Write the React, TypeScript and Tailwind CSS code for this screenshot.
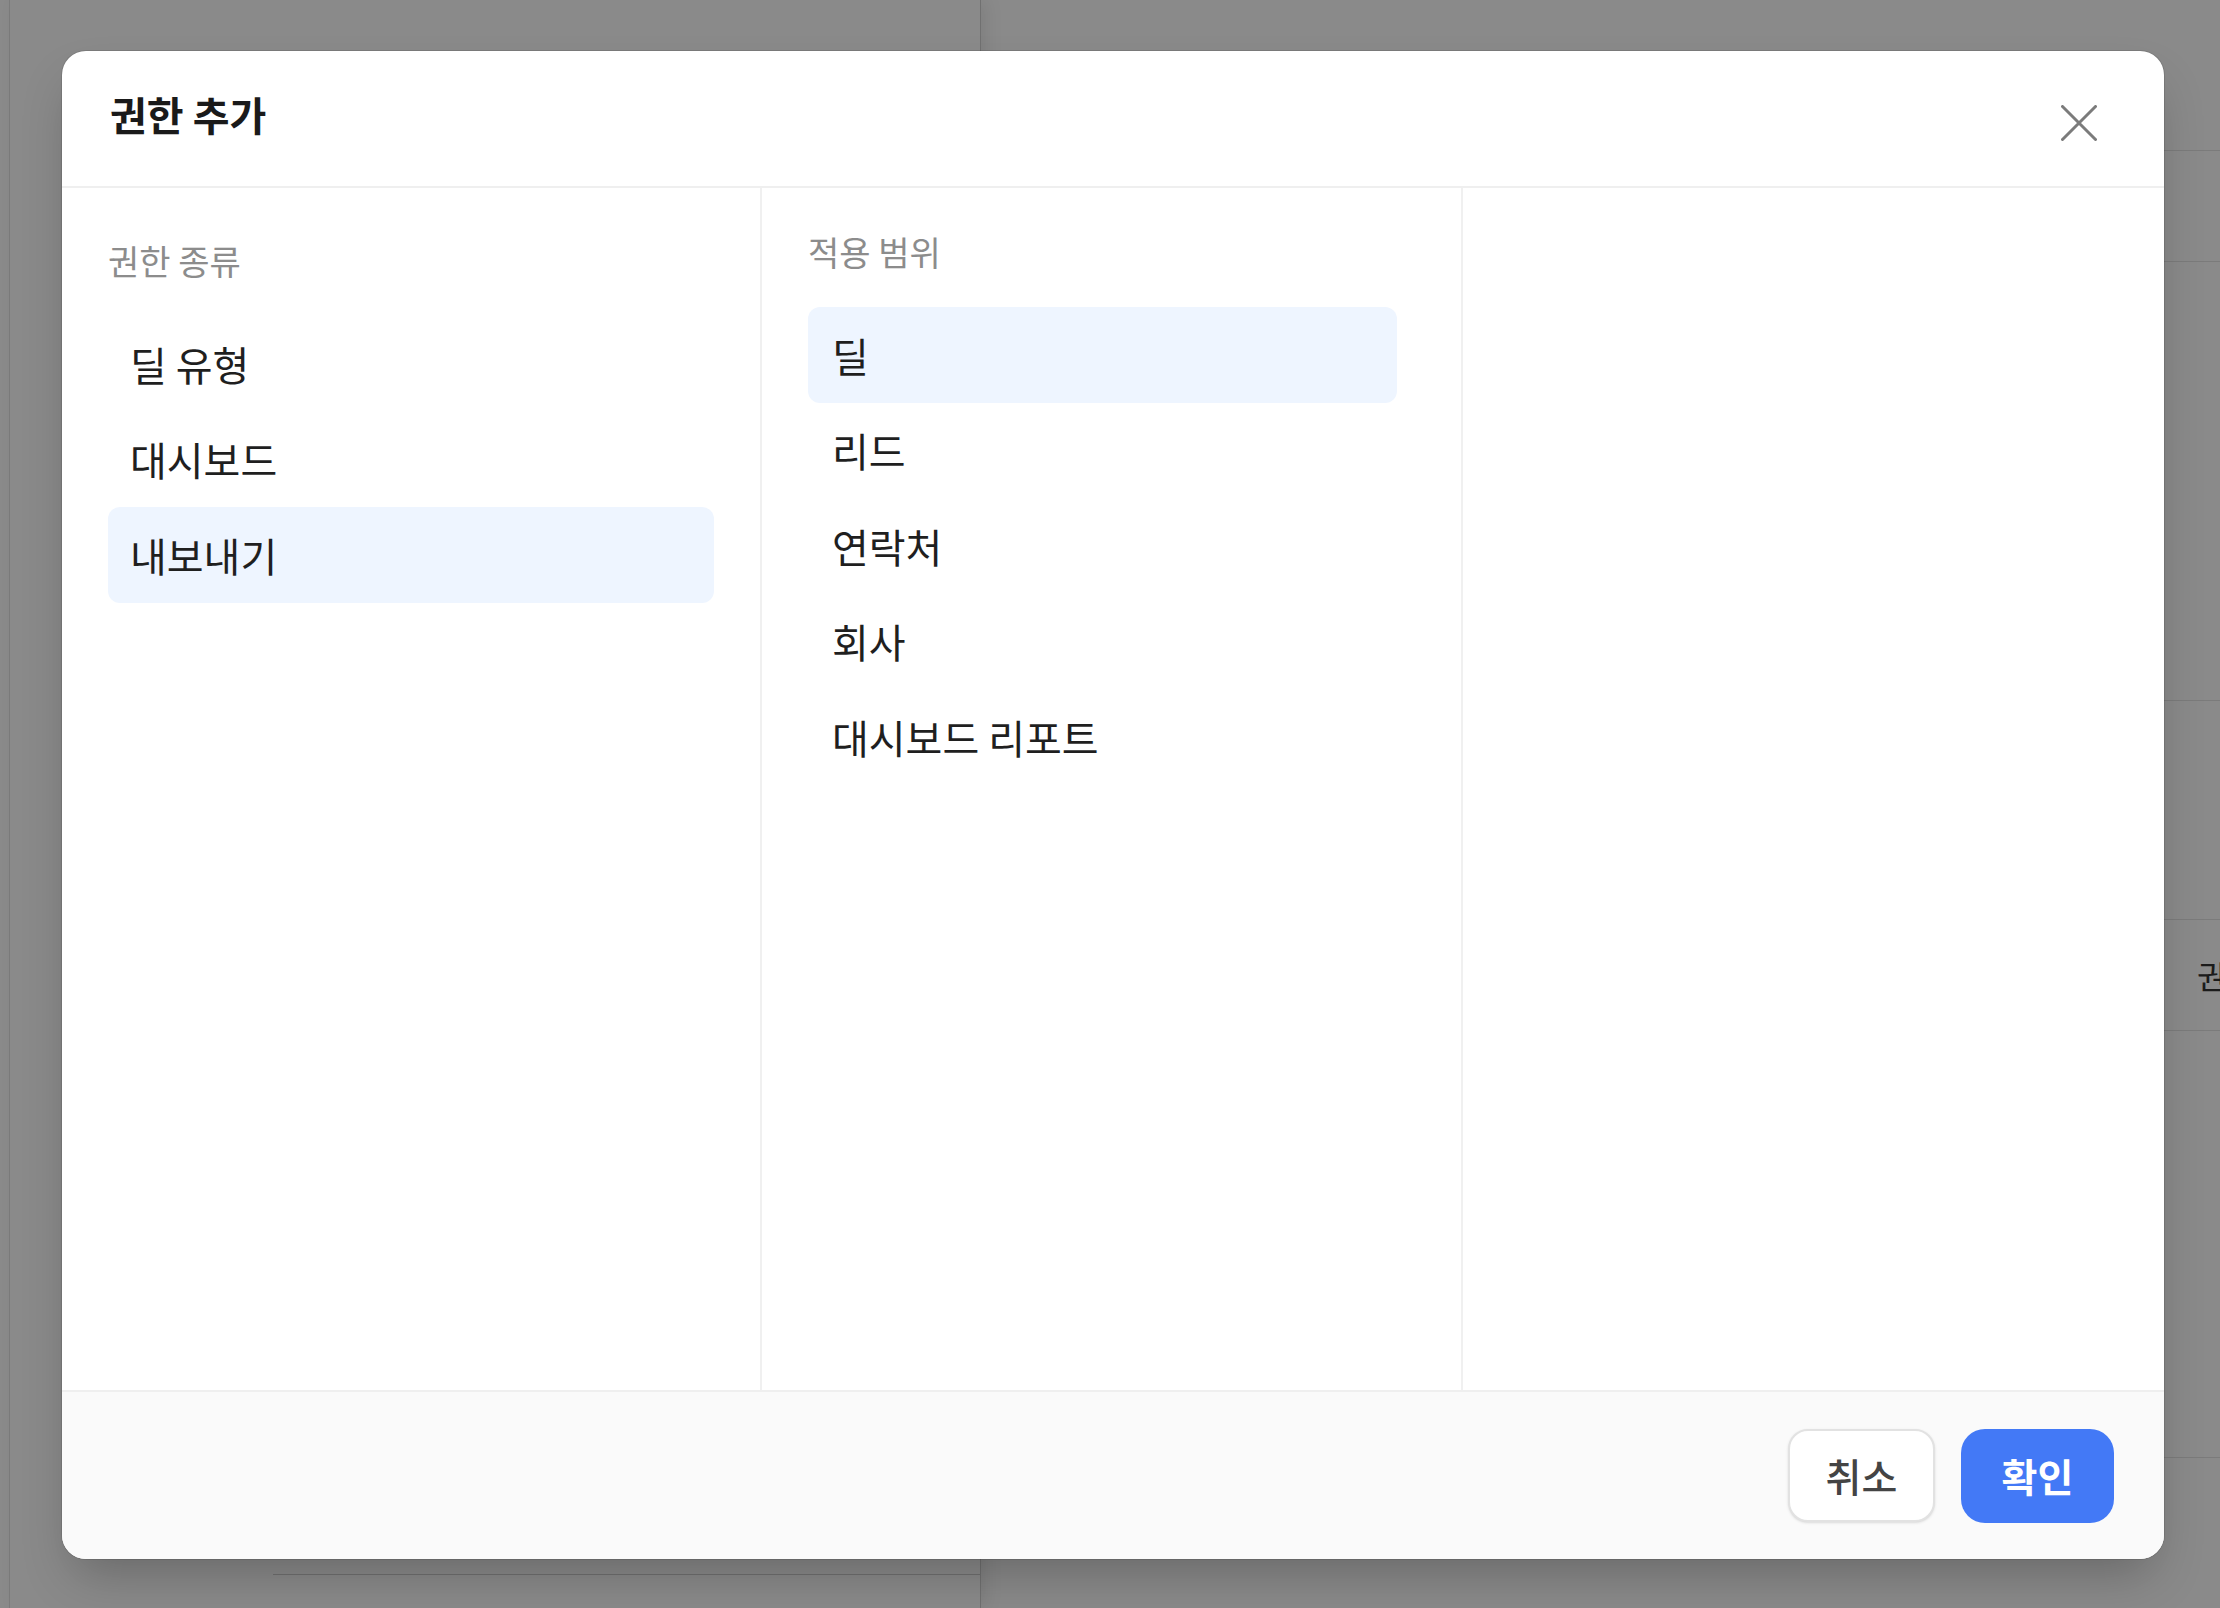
import React, { useState } from 'react';

const FONT = { fontFamily: '"Noto Sans CJK KR", "Noto Sans", sans-serif' };

const permissionTypes = ['딜 유형', '대시보드', '내보내기'];
const scopes = ['딜', '리드', '연락처', '회사', '대시보드 리포트'];

const ListItem: React.FC<{ label: string; active: boolean; onClick: () => void; inset: string }> = ({
  label,
  active,
  onClick,
  inset,
}) => (
  <button
    onClick={onClick}
    className={`flex h-[95.5px] w-full items-center rounded-[12px] text-left text-[40px] leading-none text-[#1f1f1f] ${inset} ${
      active ? 'bg-[#eef5ff]' : 'bg-transparent'
    }`}
  >
    {label}
  </button>
);

// Faded page that sits under the dimmed overlay
const BackgroundPage: React.FC = () => (
  <div className="flex h-full w-full bg-white">
    <div className="w-[10px] border-r border-[#e6e6e6]" />
    <div className="relative w-[971px] border-r border-[#d0d0d0] shadow-[6px_0_16px_rgba(0,0,0,0.08)]">
      <div className="absolute bottom-[33px] left-[263px] right-0 border-t border-[#cfcfcf]" />
    </div>
    <div className="flex flex-1 flex-col overflow-hidden">
      <div className="h-[151px] border-b border-[#e4e4e4]" />
      <div className="h-[111px] border-b border-[#e4e4e4]" />
      <div className="h-[439px] border-b border-[#e4e4e4]" />
      <div className="h-[219px] border-b border-[#e4e4e4]" />
      <div className="flex h-[111px] items-center whitespace-nowrap border-b border-[#e4e4e4] pl-[1216px] text-[32px] text-[#333]">
        권한
      </div>
      <div className="h-[427px] border-b border-[#e4e4e4]" />
    </div>
  </div>
);

export default function App() {
  const [type, setType] = useState(2);
  const [scope, setScope] = useState(0);

  return (
    <div className="relative h-[1608px] w-[2220px] overflow-hidden" style={FONT}>
      <BackgroundPage />

      <div className="absolute inset-0 flex items-center justify-center bg-black/[0.46]">
        <div className="ml-[6px] mt-[2px] flex h-[1508px] w-[2102px] flex-col overflow-hidden rounded-[24px] bg-white shadow-2xl ring-1 ring-black/10">
          {/* header */}
          <div className="flex h-[137px] shrink-0 items-center justify-between border-b-2 border-[#efefef] pl-[48px] pr-[67px]">
            <h2 className="mb-[10px] text-[40px] font-bold leading-none text-[#1a1a1a]">권한 추가</h2>
            <button className="mt-[8px]" aria-label="닫기">
              <svg width="36" height="36" viewBox="0 0 36 36" fill="none">
                <path d="M1.5 1.5L34.5 34.5M34.5 1.5L1.5 34.5" stroke="#7b7b7b" strokeWidth="3" strokeLinecap="round" />
              </svg>
            </button>
          </div>

          {/* columns */}
          <div className="grid flex-1 grid-cols-[698px_701px_1fr]">
            <div className="flex flex-col pl-[46px] pr-[46px] pt-[51px]">
              <div className="text-[34px] leading-[44px] text-[#8c8c8c]">권한 종류</div>
              <div className="mt-[33px] flex flex-col">
                {permissionTypes.map((t, i) => (
                  <ListItem key={t} label={t} active={type === i} onClick={() => setType(i)} inset="px-[22px]" />
                ))}
              </div>
            </div>

            <div className="flex flex-col border-l-2 border-[#f0f0f0] pl-[46px] pr-[64px] pt-[42px]">
              <div className="text-[34px] leading-[44px] text-[#8c8c8c]">적용 범위</div>
              <div className="mt-[33px] flex flex-col">
                {scopes.map((s, i) => (
                  <ListItem key={s} label={s} active={scope === i} onClick={() => setScope(i)} inset="px-[24px]" />
                ))}
              </div>
            </div>

            <div className="border-l-2 border-[#f0f0f0]" />
          </div>

          {/* footer */}
          <div className="flex h-[169px] shrink-0 items-center justify-end gap-[26px] border-t-2 border-[#efefef] bg-[#fafafa] pr-[50px]">
            <button className="h-[93px] w-[147px] rounded-[20px] border-2 border-[#e2e2e2] bg-white text-[39px] font-medium text-[#444444] shadow-sm">
              취소
            </button>
            <button className="h-[94px] w-[153px] rounded-[24px] bg-[#4379f6] text-[39px] font-bold text-white">
              확인
            </button>
          </div>
        </div>
      </div>
    </div>
  );
}
